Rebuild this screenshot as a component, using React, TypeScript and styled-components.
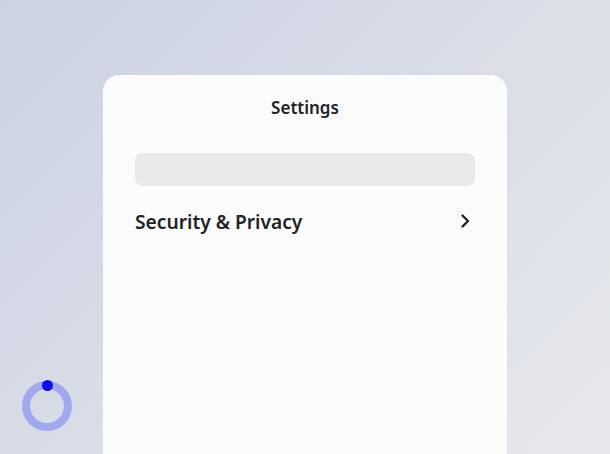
import React from "react";
import styled, { createGlobalStyle } from "styled-components";

const GlobalStyle = createGlobalStyle`
  html, body {
    margin: 0;
    padding: 0;
    height: 100%;
    overflow: hidden;
  }
  #root {
    height: 100%;
  }
`;

const Page = styled.div`
  height: 100vh;
  box-sizing: border-box;
  padding-top: 75px;
  display: flex;
  justify-content: center;
  align-items: flex-start;
  background: linear-gradient(135deg, #ccd2e2 0%, #d8dce6 45%, #e6e8ec 100%);
  font-family: "Noto Sans", "Open Sans", sans-serif;
  position: relative;
  overflow: hidden;
`;

const Card = styled.div`
  width: 404px;
  height: 420px;
  box-sizing: border-box;
  background: #fcfcfc;
  border-radius: 16px;
  padding: 21px 32px 0;
  display: flex;
  flex-direction: column;
`;

const Title = styled.h1`
  margin: 0;
  text-align: center;
  font-size: 17px;
  font-weight: 600;
  line-height: 24px;
  color: #222326;
`;

const SearchBar = styled.div`
  margin-top: 33px;
  height: 33px;
  border-radius: 8px;
  background: #e9e9eb;
`;

const Row = styled.div`
  margin-top: 20px;
  height: 30px;
  display: flex;
  align-items: center;
  justify-content: space-between;
  font-size: 19.2px;
  font-weight: 600;
  color: #222326;
  cursor: pointer;
`;

const Chevron = styled.svg`
  width: 16px;
  height: 16px;
  margin-right: 2px;
`;

const Spinner = styled.div`
  position: absolute;
  left: 22px;
  top: 381px;
  width: 50px;
  height: 50px;
  box-sizing: border-box;
  border-radius: 50%;
  border: 8px solid #a0a8f0;
`;

const Dot = styled.div`
  position: absolute;
  left: 12px;
  top: -9px;
  width: 11px;
  height: 11px;
  border-radius: 50%;
  background: #0a0cf5;
`;

const App: React.FC = () => {
  return (
    <>
      <GlobalStyle />
      <Page>
        <Card>
          <Title>Settings</Title>
          <SearchBar />
          <Row>
            <span>Security &amp; Privacy</span>
            <Chevron viewBox="0 0 16 16" fill="none">
              <path d="M5.5 2.5 L11 8 L5.5 13.5" stroke="#222326" strokeWidth="2.4" strokeLinecap="round" strokeLinejoin="round" />
            </Chevron>
          </Row>
        </Card>
        <Spinner>
          <Dot />
        </Spinner>
      </Page>
    </>
  );
};

export default App;
